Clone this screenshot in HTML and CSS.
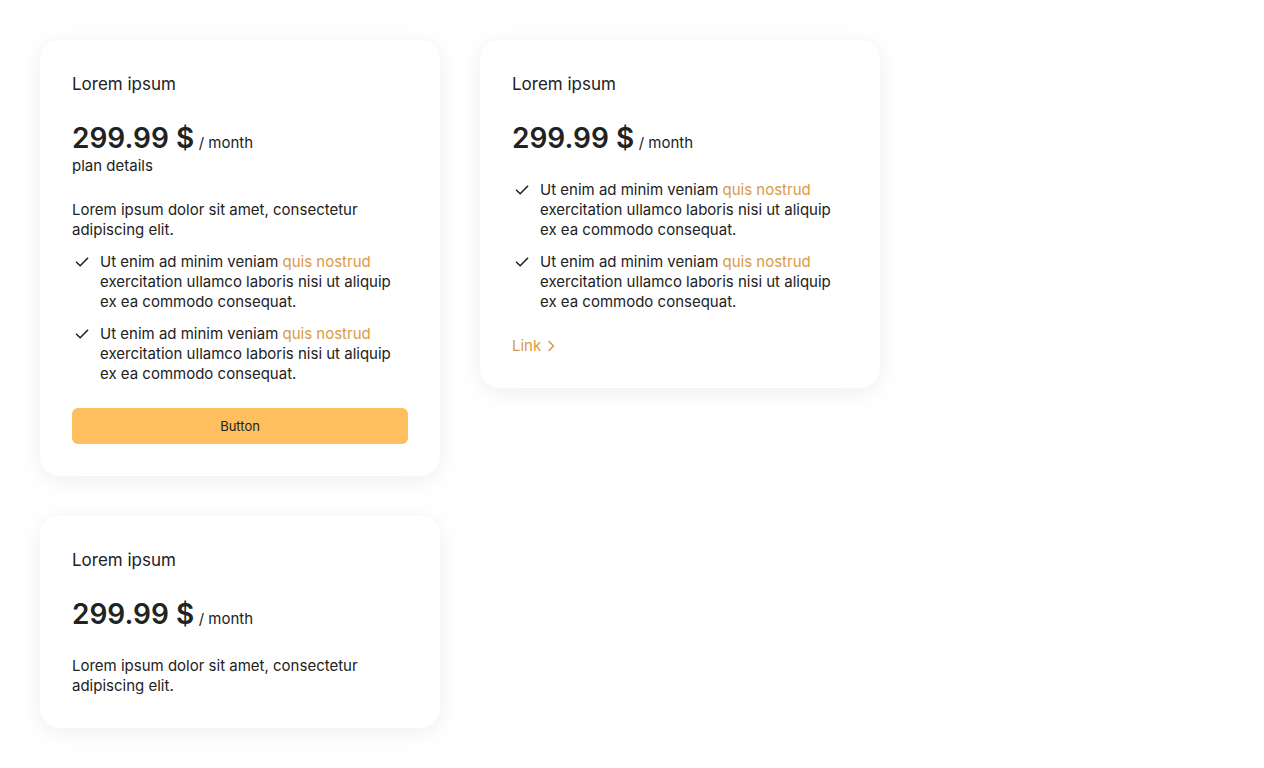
FILE: index.html
```html
<!DOCTYPE html>
<html lang="en">
<head>
<meta charset="utf-8">
<title>Pricing cards</title>
<link rel="stylesheet" href="styles.css">
</head>
<body>
<div class="grid">
  <div class="card">
    <div class="head">
      <div class="title">Lorem ipsum</div>
      <div class="price-block">
        <div class="price"><span class="amount">299.99 $</span> <span class="per">/ month</span></div>
        <div class="details">plan details</div>
      </div>
    </div>
    <div class="body">
      <p class="desc">Lorem ipsum dolor sit amet, consectetur adipiscing elit.</p>
      <ul class="list">
        <li><svg class="check" viewBox="0 0 20 20" width="20" height="20"><path d="M4.5 10.2 8.2 13.8 15.6 6.2" fill="none" stroke="#222" stroke-width="1.6" stroke-linecap="round" stroke-linejoin="round"/></svg><span>Ut enim ad minim veniam <span class="accent">quis nostrud</span> exercitation ullamco laboris nisi ut aliquip ex ea commodo consequat.</span></li>
        <li><svg class="check" viewBox="0 0 20 20" width="20" height="20"><path d="M4.5 10.2 8.2 13.8 15.6 6.2" fill="none" stroke="#222" stroke-width="1.6" stroke-linecap="round" stroke-linejoin="round"/></svg><span>Ut enim ad minim veniam <span class="accent">quis nostrud</span> exercitation ullamco laboris nisi ut aliquip ex ea commodo consequat.</span></li>
      </ul>
    </div>
    <button class="btn">Button</button>
  </div>

  <div class="card">
    <div class="head">
      <div class="title">Lorem ipsum</div>
      <div class="price"><span class="amount">299.99 $</span> <span class="per">/ month</span></div>
    </div>
    <ul class="list">
      <li><svg class="check" viewBox="0 0 20 20" width="20" height="20"><path d="M4.5 10.2 8.2 13.8 15.6 6.2" fill="none" stroke="#222" stroke-width="1.6" stroke-linecap="round" stroke-linejoin="round"/></svg><span>Ut enim ad minim veniam <span class="accent">quis nostrud</span> exercitation ullamco laboris nisi ut aliquip ex ea commodo consequat.</span></li>
      <li><svg class="check" viewBox="0 0 20 20" width="20" height="20"><path d="M4.5 10.2 8.2 13.8 15.6 6.2" fill="none" stroke="#222" stroke-width="1.6" stroke-linecap="round" stroke-linejoin="round"/></svg><span>Ut enim ad minim veniam <span class="accent">quis nostrud</span> exercitation ullamco laboris nisi ut aliquip ex ea commodo consequat.</span></li>
    </ul>
    <a class="link" href="#">Link <svg viewBox="0 0 16 16" width="16" height="16"><path d="M6 3.5 10.5 8 6 12.5" fill="none" stroke="currentColor" stroke-width="1.6" stroke-linecap="round" stroke-linejoin="round"/></svg></a>
  </div>

  <div class="card">
    <div class="head">
      <div class="title">Lorem ipsum</div>
      <div class="price"><span class="amount">299.99 $</span> <span class="per">/ month</span></div>
    </div>
    <p class="desc">Lorem ipsum dolor sit amet, consectetur adipiscing elit.</p>
  </div>
</div>
</body>
</html>
```
FILE: styles.css
```css
* { box-sizing: border-box; }
body {
  margin: 0;
  padding: 40px;
  background: #fff;
  font-family: Inter, "Noto Sans", sans-serif;
  color: #222;
}
.grid {
  display: grid;
  grid-template-columns: 400px 400px;
  gap: 40px;
  align-items: start;
}
.card {
  background: #fff;
  border-radius: 20px;
  box-shadow: 0 4px 24px rgba(0, 0, 0, 0.07);
  padding: 32px;
  display: flex;
  flex-direction: column;
  gap: 24px;
}
.head {
  display: flex;
  flex-direction: column;
  gap: 24px;
}
.title {
  font-size: 17px;
  line-height: 24px;
  font-weight: 400;
}
.price {
  line-height: 36px;
  height: 36px;
}
.amount {
  font-size: 28px;
  font-weight: 600;
}
.per {
  font-size: 15px;
}
.details {
  font-size: 15px;
  line-height: 20px;
}
.body {
  display: flex;
  flex-direction: column;
  gap: 12px;
}
.desc {
  margin: 0;
  font-size: 15px;
  line-height: 20px;
}
.list {
  list-style: none;
  margin: 0;
  padding: 0;
  display: flex;
  flex-direction: column;
  gap: 12px;
}
.list li {
  display: flex;
  gap: 8px;
  font-size: 15px;
  line-height: 20px;
}
.check { flex: none; }
.accent { color: #d99b45; }
.btn {
  height: 36px;
  border: none;
  border-radius: 6px;
  background: #ffbf5e;
  color: #222;
  font-family: inherit;
  font-size: 13px;
  cursor: pointer;
}
.link {
  display: inline-flex;
  align-items: center;
  gap: 2px;
  align-self: flex-start;
  color: #d99b45;
  text-decoration: none;
  font-size: 15px;
  line-height: 20px;
}
```
